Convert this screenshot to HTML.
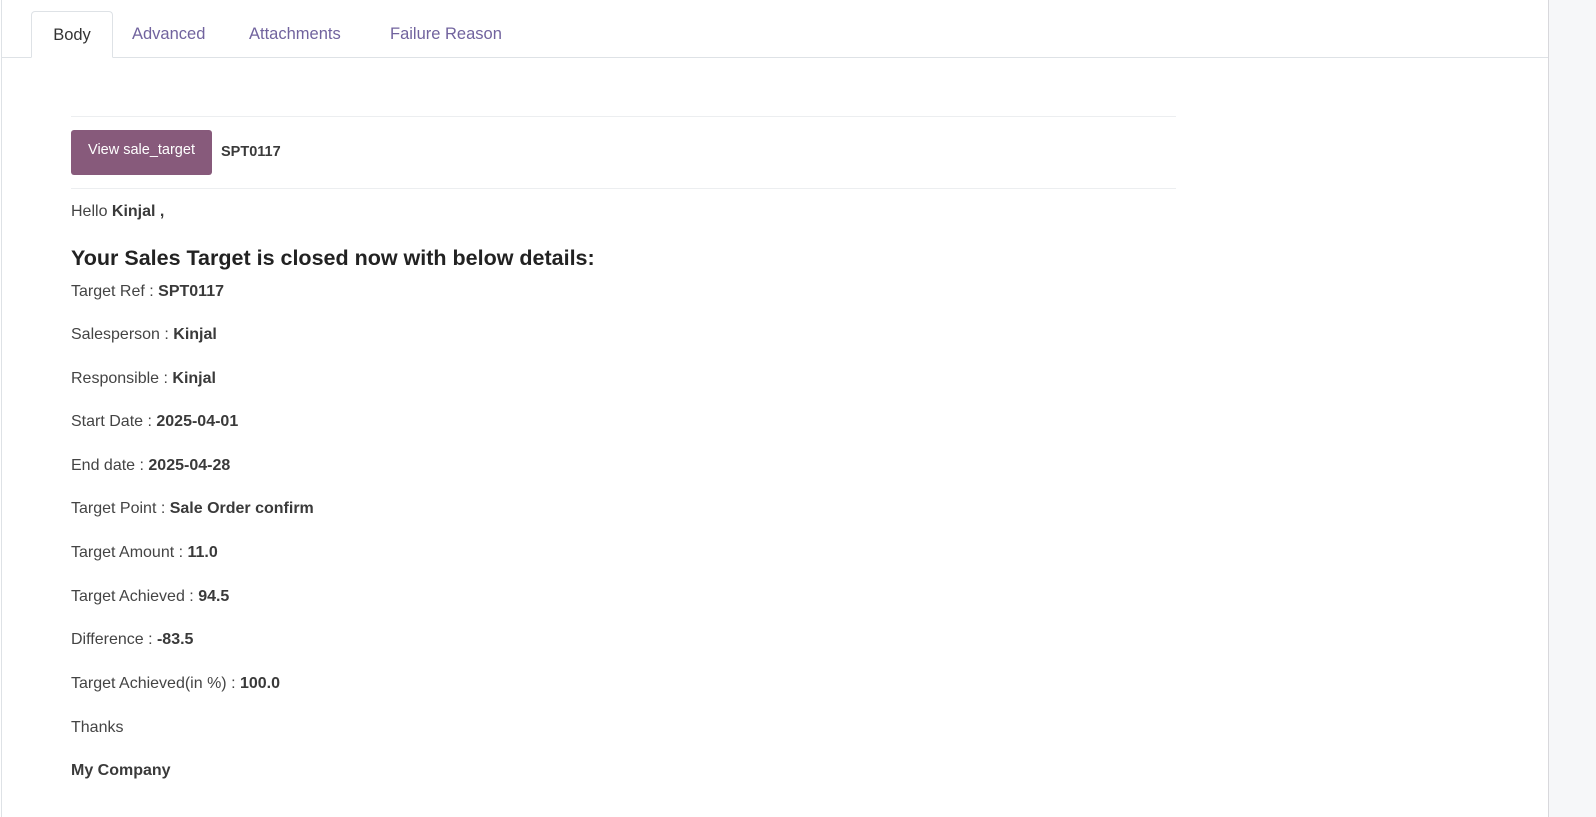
<!DOCTYPE html>
<html><head><meta charset="utf-8"><style>
*{margin:0;padding:0;box-sizing:border-box}
body{width:1596px;height:817px;background:#fff;font-family:"Liberation Sans",sans-serif;color:#444;font-size:16px;position:relative;overflow:hidden}
.frame{position:absolute;left:1px;top:0;width:1548px;height:817px;border-left:1px solid #dee2e6;border-right:1px solid #d8d8dc;background:#fff}
.side{position:absolute;left:1549px;top:0;width:47px;height:817px;background:#f6f7f9}
.tabline{position:absolute;left:1px;top:57px;width:1547px;height:1px;background:#dee2e6}
.tab{position:absolute;top:11px;height:47px;line-height:46px;font-size:16.5px;color:#71639e}
.tab.act{left:31px;width:82px;border:1px solid #dee2e6;border-bottom:1px solid #fff;border-radius:4px 4px 0 0;background:#fff;color:#333;text-align:center}
.hr{position:absolute;left:71px;width:1105px;height:1px;background:#eceef0}
.btn{position:absolute;left:71px;top:130px;width:141px;height:45px;background:#875a7b;border-radius:3px;color:#fff;font-size:14.5px;line-height:41px;text-align:center}
.t{position:absolute;left:71px;white-space:nowrap}
b{color:#3a3a3a}
h2{position:absolute;left:71px;top:246px;font-size:21.5px;font-weight:bold;color:#222;white-space:nowrap}
</style></head><body>
<div class="frame"></div><div class="side"></div>
<div class="tabline"></div>
<div class="tab act">Body</div>
<div class="tab" style="left:132px">Advanced</div>
<div class="tab" style="left:249px">Attachments</div>
<div class="tab" style="left:390px">Failure Reason</div>
<div class="hr" style="top:116px"></div>
<div class="btn">View sale_target</div>
<div class="t" style="left:221px;top:144px;font-size:14.5px"><b>SPT0117</b></div>
<div class="hr" style="top:188px"></div>
<div class="t" style="top:203px">Hello <b>Kinjal ,</b></div>
<h2>Your Sales Target is closed now with below details:</h2>
<div class="t" style="top:283px">Target Ref : <b>SPT0117</b></div>
<div class="t" style="top:326px">Salesperson : <b>Kinjal</b></div>
<div class="t" style="top:370px">Responsible : <b>Kinjal</b></div>
<div class="t" style="top:413px">Start Date : <b>2025-04-01</b></div>
<div class="t" style="top:457px">End date : <b>2025-04-28</b></div>
<div class="t" style="top:500px">Target Point : <b>Sale Order confirm</b></div>
<div class="t" style="top:544px">Target Amount : <b>11.0</b></div>
<div class="t" style="top:588px">Target Achieved : <b>94.5</b></div>
<div class="t" style="top:631px">Difference : <b>-83.5</b></div>
<div class="t" style="top:675px">Target Achieved(in %) : <b>100.0</b></div>
<div class="t" style="top:719px">Thanks</div>
<div class="t" style="top:762px"><b>My Company</b></div>
</body></html>
